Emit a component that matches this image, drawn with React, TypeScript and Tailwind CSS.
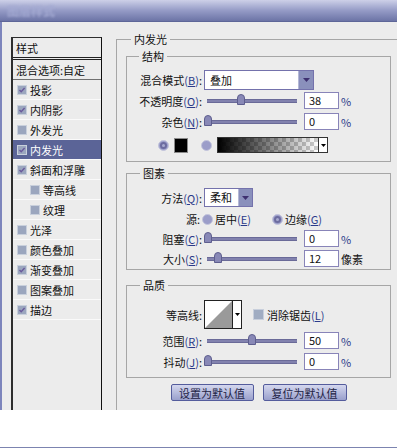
import React from "react";

const K = ({ k }: { k: string }) => (
  <span className="text-[#2b3a8a]">
    (<span className="underline underline-offset-[1px]">{k}</span>)
  </span>
);

function Check({ checked }: { checked?: boolean }) {
  return (
    <div className="w-[10px] h-[10px] shrink-0 bg-[#9ba6be] border border-[#c9d0dc] flex items-center justify-center">
      {checked && (
        <svg width="8" height="8" viewBox="0 0 8 8">
          <path d="M1.5 4 L3.2 5.8 L6.6 2" stroke="#6a5a9c" strokeWidth="1.4" fill="none" />
        </svg>
      )}
    </div>
  );
}

function Radio({ on }: { on?: boolean }) {
  return (
    <div className="w-[11px] h-[11px] shrink-0 rounded-full bg-[#9b9dc9] border border-[#c3c5dc] flex items-center justify-center">
      {on && <div className="w-[7px] h-[7px] rounded-full border-2 border-[#6c6ca0] bg-[#a8aad0]" />}
    </div>
  );
}

function Slider({ left }: { left: number }) {
  return (
    <div className="relative ml-[2px] w-[96px] h-[17px] flex items-center">
      <div className="ml-[3px] w-[90px] h-[4px] bg-[#8282ae] border-y border-[#6a6a98]" />
      <div
        className="absolute top-[2px] w-[8px] h-[11px] rounded-t-[4px] bg-[#8888b6] border border-[#5e5e8e]"
        style={{ left }}
      />
    </div>
  );
}

function Input({ v }: { v: string }) {
  return (
    <div className="ml-[4px] w-[35px] h-[17px] bg-white border border-[#8884b8] pl-[4px] text-[11px] leading-[15px] text-[#111]">
      {v}
    </div>
  );
}

function ListRow({
  label,
  checked,
  sub,
  selected,
}: {
  label: string;
  checked?: boolean;
  sub?: boolean;
  selected?: boolean;
}) {
  return (
    <div
      className={
        "h-[20px] border-b border-[#fafafa] flex items-center " +
        (sub ? "pl-[17px] " : "pl-[4px] ") +
        (selected ? "bg-[#5b6497] text-white" : "text-[#111]")
      }
    >
      <Check checked={checked} />
      <span className="ml-[3px]">{label}</span>
    </div>
  );
}

export default function App() {
  return (
    <div className="w-[397px] h-[448px] bg-white overflow-hidden relative font-['Noto_Sans_CJK_SC',sans-serif] text-[11px] leading-[16px] text-[#111]">
      {/* title bar */}
      <div className="h-[22px] bg-gradient-to-b from-[#cdd0e8] via-[#959bc6] to-[#6c74a6] border-b border-[#5e6698] flex items-center pl-[7px]">
        <span className="text-[12px] font-bold text-[#a4aad2] blur-[0.8px]">图层样式</span>
      </div>

      {/* body */}
      <div className="h-[388px] bg-[#ececec] border-l-2 border-[#7d85bc] flex overflow-hidden">
        {/* left list */}
        <div className="ml-[9px] mt-[15px] w-[91px] h-[400px] shrink-0 border border-l-2 border-[#2e2e2e] border-r-[#111] bg-[#ececec]">
          <div className="h-[22px] pl-[3px] flex items-center border-b-[3px] border-double border-[#222]">样式</div>
          <div className="h-[20px] pl-[3px] flex items-center border-b border-[#707070]">混合选项:自定</div>
          <ListRow label="投影" checked />
          <ListRow label="内阴影" checked />
          <ListRow label="外发光" />
          <ListRow label="内发光" checked selected />
          <ListRow label="斜面和浮雕" checked />
          <ListRow label="等高线" sub />
          <ListRow label="纹理" sub />
          <ListRow label="光泽" />
          <ListRow label="颜色叠加" />
          <ListRow label="渐变叠加" checked />
          <ListRow label="图案叠加" />
          <ListRow label="描边" checked />
        </div>

        {/* right panel */}
        <fieldset className="ml-[14px] mt-[9px] w-[300px] h-[420px] shrink-0 border border-[#a6a6a6] pl-[9px] pt-[1px]">
          <legend className="ml-[5px] px-[3px] leading-[16px]">内发光</legend>

          {/* 结构 */}
          <fieldset className="w-[265px] border border-[#a6a6a6] pt-[6px] pb-[8px]">
            <legend className="ml-[12px] px-[3px] leading-[16px]">结构</legend>
            <div className="h-[20px] flex items-center">
              <div className="w-[75px] text-right">
                混合模式<K k="B" />:
              </div>
              <div className="ml-[2px] w-[110px] h-[20px] bg-white border border-[#7472ac] flex">
                <div className="flex-1 pl-[5px] leading-[18px]">叠加</div>
                <div className="w-[15px] h-full bg-[#8a90bc] border-l border-[#b4b8d6] flex items-center justify-center">
                  <svg width="7" height="4" viewBox="0 0 7 4">
                    <path d="M0 0 H7 L3.5 4 Z" fill="#3e3070" />
                  </svg>
                </div>
              </div>
            </div>
            <div className="mt-[2px] h-[17px] flex items-center">
              <div className="w-[75px] text-right">
                不透明度<K k="O" />:
              </div>
              <Slider left={33} />
              <Input v="38" />
              <span className="ml-[2px] text-[#2b3a8a]">%</span>
            </div>
            <div className="mt-[4px] h-[17px] flex items-center">
              <div className="w-[75px] text-right">
                杂色<K k="N" />:
              </div>
              <Slider left={0} />
              <Input v="0" />
              <span className="ml-[2px] text-[#2b3a8a]">%</span>
            </div>
            <div className="mt-[7px] h-[16px] flex items-center pl-[31px]">
              <Radio on />
              <div className="ml-[5px] w-[14px] h-[15px] bg-black border border-[#8a8a8a]" />
              <div className="ml-[13px]">
                <Radio />
              </div>
              <div className="ml-[5px] w-[111px] h-[16px] border border-[#333] bg-white flex">
                <svg width="100" height="14" className="block">
                  <defs>
                    <pattern id="chk" width="8" height="8" patternUnits="userSpaceOnUse">
                      <rect width="8" height="8" fill="#ffffff" />
                      <rect width="4" height="4" fill="#cccccc" />
                      <rect x="4" y="4" width="4" height="4" fill="#cccccc" />
                    </pattern>
                    <linearGradient id="fade" x1="0" x2="1" y1="0" y2="0">
                      <stop offset="0" stopColor="#000" stopOpacity="1" />
                      <stop offset="1" stopColor="#000" stopOpacity="0" />
                    </linearGradient>
                  </defs>
                  <rect width="100" height="14" fill="url(#chk)" />
                  <rect width="100" height="14" fill="url(#fade)" />
                </svg>
                <div className="flex-1 border-l border-[#333] bg-white flex items-center justify-center">
                  <svg width="5" height="3" viewBox="0 0 5 3">
                    <path d="M0 0 H5 L2.5 3 Z" fill="#000" />
                  </svg>
                </div>
              </div>
            </div>
          </fieldset>

          {/* 图素 */}
          <fieldset className="mt-[3px] w-[265px] border border-[#a6a6a6] pt-[7px] pb-[2px]">
            <legend className="ml-[13px] px-[3px] leading-[16px]">图素</legend>
            <div className="h-[19px] flex items-center">
              <div className="w-[75px] text-right">
                方法<K k="Q" />:
              </div>
              <div className="ml-[2px] w-[49px] h-[19px] bg-white border border-[#7472ac] flex">
                <div className="flex-1 pl-[5px] leading-[17px]">柔和</div>
                <div className="w-[14px] h-full bg-[#8a90bc] border-l border-[#b4b8d6] flex items-center justify-center">
                  <svg width="7" height="4" viewBox="0 0 7 4">
                    <path d="M0 0 H7 L3.5 4 Z" fill="#3e3070" />
                  </svg>
                </div>
              </div>
            </div>
            <div className="mt-[5px] h-[14px] flex items-center">
              <div className="w-[73px] text-right">源:</div>
              <div className="ml-[2px]">
                <Radio />
              </div>
              <span className="ml-[2px] w-[55px]">
                居中<K k="E" />
              </span>
              <div className="ml-[2px]">
                <Radio on />
              </div>
              <span className="ml-[2px]">
                边缘<K k="G" />
              </span>
            </div>
            <div className="mt-[4px] h-[17px] flex items-center">
              <div className="w-[75px] text-right">
                阻塞<K k="C" />:
              </div>
              <Slider left={0} />
              <Input v="0" />
              <span className="ml-[2px] text-[#2b3a8a]">%</span>
            </div>
            <div className="mt-[3px] h-[17px] flex items-center">
              <div className="w-[75px] text-right">
                大小<K k="S" />:
              </div>
              <Slider left={10} />
              <Input v="12" />
              <span className="ml-[2px]">像素</span>
            </div>
          </fieldset>

          {/* 品质 */}
          <fieldset className="mt-[7px] w-[265px] border border-[#a6a6a6] pt-[7px] pb-[7px]">
            <legend className="ml-[13px] px-[3px] leading-[16px]">品质</legend>
            <div className="h-[29px] flex items-center">
              <div className="w-[75px] text-right">等高线:</div>
              <div className="ml-[2px] w-[38px] h-[29px] border border-[#222] bg-white flex">
                <svg width="27" height="27" className="block">
                  <polygon points="0,27 27,0 27,27" fill="#9a9a9a" />
                </svg>
                <div className="flex-1 border-l border-[#222] flex items-center justify-center">
                  <svg width="5" height="3" viewBox="0 0 5 3">
                    <path d="M0 0 H5 L2.5 3 Z" fill="#000" />
                  </svg>
                </div>
              </div>
              <div className="ml-[11px] w-[11px] h-[11px] bg-[#a0acc2] border border-[#c8cfdc]" />
              <span className="ml-[3px]">
                消除锯齿<K k="L" />
              </span>
            </div>
            <div className="mt-[3px] h-[17px] flex items-center">
              <div className="w-[75px] text-right">
                范围<K k="R" />:
              </div>
              <Slider left={44} />
              <Input v="50" />
              <span className="ml-[2px] text-[#2b3a8a]">%</span>
            </div>
            <div className="mt-[4px] h-[17px] flex items-center">
              <div className="w-[75px] text-right">
                抖动<K k="J" />:
              </div>
              <Slider left={0} />
              <Input v="0" />
              <span className="ml-[2px] text-[#2b3a8a]">%</span>
            </div>
          </fieldset>

          <div className="mt-[6px] w-[265px] flex justify-center gap-[9px]">
            <div className="w-[83px] h-[17px] rounded-[2px] border border-[#545c9c] bg-gradient-to-b from-[#d4d7ee] to-[#9aa0cc] flex items-center justify-center text-[#222244]">
              设置为默认值
            </div>
            <div className="w-[84px] h-[17px] rounded-[2px] border border-[#545c9c] bg-gradient-to-b from-[#d4d7ee] to-[#9aa0cc] flex items-center justify-center text-[#222244]">
              复位为默认值
            </div>
          </div>
        </fieldset>
      </div>

      {/* bottom */}
      <div className="mt-[37px] h-px bg-[#7c84b0]" />
    </div>
  );
}
